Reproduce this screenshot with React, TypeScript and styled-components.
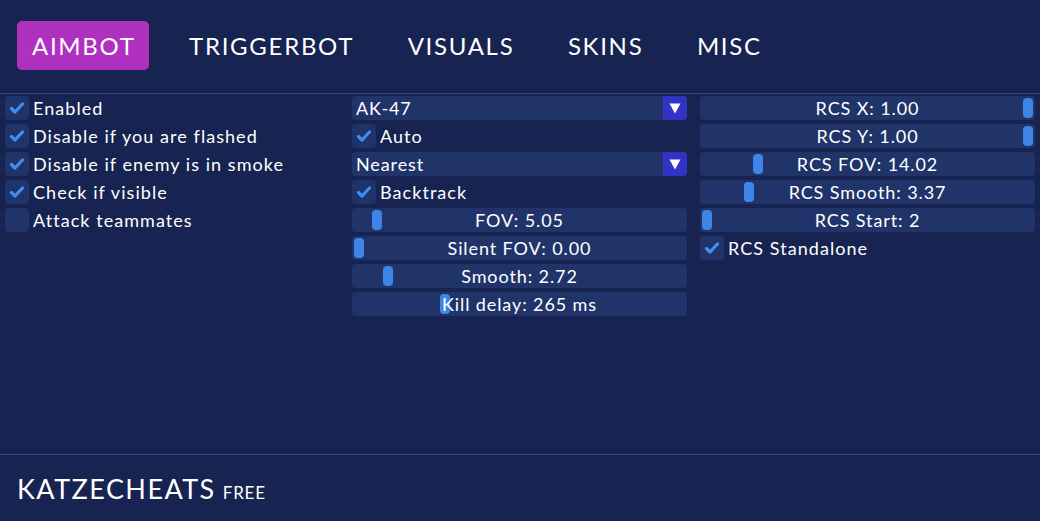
import styled, { createGlobalStyle } from 'styled-components'

const GlobalStyle = createGlobalStyle`
  html, body {
    margin: 0;
    padding: 0;
    background: #172350;
  }
  body {
    font-family: Lato, "Open Sans", sans-serif;
    color: #ffffff;
  }
`

const Window = styled.div`
  width: 1040px;
  height: 521px;
  background: #172350;
  display: flex;
  flex-direction: column;
  overflow: hidden;
`

const TabBar = styled.div`
  height: 94px;
  box-sizing: border-box;
  padding: 21px 17px 0;
  display: flex;
  align-items: flex-start;
  gap: 25px;
  border-bottom: 1px solid #36457a;
`

const Tab = styled.button<{ $active?: boolean }>`
  height: 49px;
  padding: 0 13.5px 0 15px;
  border: none;
  border-radius: 5px;
  background: ${(p) => (p.$active ? '#b030c0' : 'transparent')};
  color: #ffffff;
  font-family: Lato, sans-serif;
  font-size: 24px;
  letter-spacing: 1.7px;
  cursor: pointer;
`

const Content = styled.div`
  flex: 1;
  display: grid;
  grid-template-columns: 347px 348px 345px;
  padding-top: 2px;
  border-bottom: 1px solid #36457a;
`

const Column = styled.div`
  display: flex;
  flex-direction: column;
  gap: 4px;
  padding-left: 5px;
`

const Row = styled.div`
  height: 24px;
  display: flex;
  align-items: center;
  gap: 4px;
  font-size: 18px;
  letter-spacing: 1.05px;
  white-space: nowrap;
`

const Box = styled.span`
  width: 24px;
  height: 24px;
  border-radius: 4px;
  background: #20346a;
  display: flex;
  align-items: center;
  justify-content: center;
  flex-shrink: 0;
`

const Frame = styled.div`
  width: 335px;
  height: 24px;
  border-radius: 4px;
  background: #20346a;
  position: relative;
  display: flex;
  align-items: center;
  font-size: 18px;
  letter-spacing: 0.9px;
  white-space: nowrap;
`

const ComboText = styled.span`
  flex: 1;
  padding-left: 4px;
`

const ComboArrow = styled.span`
  width: 24px;
  height: 24px;
  border-radius: 0 4px 4px 0;
  background: #3232c4;
  display: flex;
  align-items: center;
  justify-content: center;
`

const SliderLabel = styled.span`
  flex: 1;
  text-align: center;
  position: relative;
  z-index: 2;
`

const Grab = styled.span`
  position: absolute;
  top: 2px;
  width: 10px;
  height: 20px;
  border-radius: 4px;
  background: #3d86e8;
  z-index: 1;
`

const Footer = styled.div`
  height: 66px;
  box-sizing: border-box;
  padding: 17px 17px 0;
  display: flex;
  align-items: baseline;
  gap: 7px;
`

const Brand = styled.span`
  font-size: 27px;
  letter-spacing: 1.45px;
`

const Edition = styled.span`
  font-size: 17px;
  letter-spacing: 0.8px;
`

function Check() {
  return (
    <svg width="16" height="14" viewBox="0 0 16 14">
      <path d="M2.5 7.5 L6 11 L13.5 3" fill="none" stroke="#3f8ef2" strokeWidth="3.2" strokeLinecap="round" strokeLinejoin="round" />
    </svg>
  )
}

function Checkbox({ label, checked }: { label: string; checked?: boolean }) {
  return (
    <Row>
      <Box>{checked && <Check />}</Box>
      <span>{label}</span>
    </Row>
  )
}

function Combo({ value }: { value: string }) {
  return (
    <Frame>
      <ComboText>{value}</ComboText>
      <ComboArrow>
        <svg width="12" height="11" viewBox="0 0 12 11">
          <path d="M0.5 0.5 H11.5 L6 10.5 Z" fill="#ffffff" />
        </svg>
      </ComboArrow>
    </Frame>
  )
}

function Slider({ label, pos }: { label: string; pos: number }) {
  return (
    <Frame>
      <Grab style={{ left: pos }} />
      <SliderLabel>{label}</SliderLabel>
    </Frame>
  )
}

export default function App() {
  return (
    <Window>
      <GlobalStyle />
      <TabBar>
        <Tab $active>AIMBOT</Tab>
        <Tab>TRIGGERBOT</Tab>
        <Tab>VISUALS</Tab>
        <Tab>SKINS</Tab>
        <Tab>MISC</Tab>
      </TabBar>
      <Content>
        <Column>
          <Checkbox label="Enabled" checked />
          <Checkbox label="Disable if you are flashed" checked />
          <Checkbox label="Disable if enemy is in smoke" checked />
          <Checkbox label="Check if visible" checked />
          <Checkbox label="Attack teammates" />
        </Column>
        <Column>
          <Combo value="AK-47" />
          <Checkbox label="Auto" checked />
          <Combo value="Nearest" />
          <Checkbox label="Backtrack" checked />
          <Slider label="FOV: 5.05" pos={20} />
          <Slider label="Silent FOV: 0.00" pos={2} />
          <Slider label="Smooth: 2.72" pos={31} />
          <Slider label="Kill delay: 265 ms" pos={88} />
        </Column>
        <Column>
          <Slider label="RCS X: 1.00" pos={323} />
          <Slider label="RCS Y: 1.00" pos={323} />
          <Slider label="RCS FOV: 14.02" pos={53} />
          <Slider label="RCS Smooth: 3.37" pos={44} />
          <Slider label="RCS Start: 2" pos={2} />
          <Checkbox label="RCS Standalone" checked />
        </Column>
      </Content>
      <Footer>
        <Brand>KATZECHEATS</Brand>
        <Edition>FREE</Edition>
      </Footer>
    </Window>
  )
}
